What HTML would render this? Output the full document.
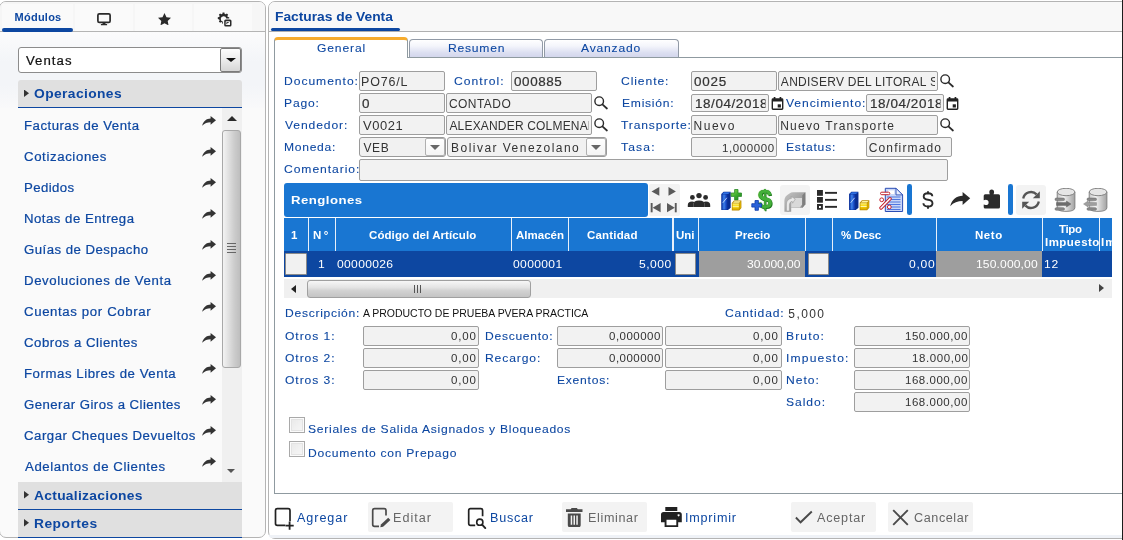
<!DOCTYPE html>
<html><head><meta charset="utf-8"><title>Facturas de Venta</title>
<style>
*{box-sizing:border-box;margin:0;padding:0}
html,body{width:1123px;height:540px;overflow:hidden;background:#fff}
body{font-family:"Liberation Sans",sans-serif;font-size:13px;color:#222;position:relative}
.a{position:absolute}
.t{position:absolute;white-space:pre;display:block;transform-origin:0 0}
i.a{width:0;height:0}
.panel{position:absolute;border:1px solid #b4b4b4;border-radius:7px;background:#fafafa}
#lp{left:-1px;top:1px;width:267px;height:537px;overflow:hidden}
#lp .hdr{position:absolute;left:0;top:0;width:264px;height:30px;border-bottom:1px solid #b4b4b4;background:#fafafa}
.acc{position:absolute;left:17px;width:224px;height:28px;background:#e0e0e0;border-bottom:1px solid #0d47a1}
.acc i{position:absolute;left:6px;top:9.500px;width:5px;height:7.500px;background:#333;clip-path:polygon(0 0,100% 50%,0 100%)}
#mp{left:268px;top:1px;width:870px;height:538px;border-top-right-radius:0;border-bottom-right-radius:0;background:#fff}
.f{position:absolute;height:20px;border:1px solid #9e9e9e;border-radius:2px;background:#f2f2f2;overflow:hidden}
.f .t{color:#333}
.btn{position:absolute;top:502px;height:29.600px;background:#f3f3f3;border-radius:2px}
#root{position:absolute;left:0;top:0;width:1123px;height:540px;will-change:transform}

</style></head><body><div id="root">
<div class="panel" id="lp"></div>
<div class="a" style="left:0px;top:31px;width:265px;height:1px;background:#b4b4b4"></div>
<div class="a" style="left:0px;top:32px;width:265px;height:76px;background:linear-gradient(#fbfbfc,#f3f5f8 40%,#f3f5f8 70%,#f9f9fa)"></div>
<div class="a" style="left:0px;top:2px;width:265px;height:29px;background:#f6f6f6;border-radius:6px 6px 0 0"></div>
<div class="a" style="left:2px;top:4px;width:71px;height:27px;background:#fafafa"></div><div class="a" style="left:75px;top:4px;width:58px;height:27px;background:#fafafa"></div><div class="a" style="left:135px;top:4px;width:57px;height:27px;background:#fafafa"></div><div class="a" style="left:194px;top:4px;width:58px;height:27px;background:#fafafa"></div>
<span class="t" style="left:14.62px;top:9px;font-size:11px;line-height:16px;letter-spacing:0.233px;color:#0d47a1;font-weight:700;">Módulos</span>
<div class="a" style="left:2px;top:28px;width:71px;height:4px;background:#0d47a1;border-radius:2px"></div>
<svg class="a" style="left:97px;top:12.5px" width="14" height="13" viewBox="0 0 14 13"><rect x=".9" y=".9" width="12.2" height="8.4" rx="1.4" fill="none" stroke="#2a2a2a" stroke-width="1.7"/><path d="M5.800 9.600h2.400l.4 1.500h1.500v1.100H3.900v-1.100h1.500z" fill="#2a2a2a"/></svg>
<svg class="a" style="left:157.500px;top:12.800px" width="13" height="12.400" viewBox="0 0 13 12.400"><path fill="#2a2a2a" d="M6.500 0l2 4.200 4.500.6-3.300 3.100.85 4.500L6.500 10.200 2.450 12.400l.85-4.500L0 4.800l4.500-.6z"/></svg>
<svg class="a" style="left:217px;top:11.500px" width="15" height="15" viewBox="0 0 15 15">
<g fill="#2a2a2a"><path d="M5.600.5h1.800l.3 1.400 1 .45 1.200-.8 1.250 1.250-.8 1.200.45 1 1.400.3v1.100H9.300A2.800 2.800 0 1 0 6 9.700v2.200H5.600l-.3-1.400-1-.45-1.200.8L1.850 9.600l.8-1.200-.45-1L.8 7.100V5.300l1.400-.3.45-1-.8-1.200L3.100 1.550l1.200.8 1-.45z"/>
<rect x="7.200" y="7.400" width="7.300" height="7.100" rx="1.500"/></g>
<rect x="8.700" y="9.300" width="4.300" height="3.700" rx=".5" fill="#fafafa"/><path d="M9.800 12.200v-1.700h1.900" stroke="#2a2a2a" stroke-width=".9" fill="none"/></svg>
<div class="a" style="left:18px;top:47px;width:224px;height:26px;border:1px solid #8c8c8c;border-radius:3px;background:#fff"></div>
<span class="t" style="left:25.86px;top:53px;font-size:12px;line-height:16px;letter-spacing:0.938px;color:#111;transform:scaleX(1.1);-webkit-text-stroke:.2px;">Ventas</span>
<div class="a" style="left:220px;top:48px;width:21px;height:24px;border:1px solid #7a7a7a;border-radius:2px;background:linear-gradient(#fdfdfd,#ececec 50%,#d6d6d6)"></div>
<i class="a" style="left:225.500px;top:57.500px;border-top:4.500px solid #111;border-left:5px solid transparent;border-right:5px solid transparent"></i>
<div class="acc" style="left:18px;top:80px;border-radius:3px 3px 0 0;"><i></i></div><span class="t" style="left:33.84px;top:86px;font-size:12px;line-height:16px;letter-spacing:0.347px;color:#0d47a1;font-weight:700;transform:scaleX(1.15);">Operaciones</span>
<div class="a" style="left:18px;top:108px;width:224px;height:373.500px;background:#fafafa"></div>
<span class="t" style="left:24.41px;top:118px;font-size:12px;line-height:16px;letter-spacing:0.449px;color:#0d47a1;transform:scaleX(1.1);-webkit-text-stroke:.2px;">Facturas de Venta</span>
<svg class="a" style="left:202px;top:115.5px" width="14" height="10" viewBox="0 0 14 10"><path fill="#333" d="M8.600 0 L14 4.300 L8.600 8.800 V6.200 C5.400 6.200 2.400 7.200 0.200 9.800 C1.200 5.200 4.600 2.700 8.600 2.600 Z"/></svg>
<span class="t" style="left:24.31px;top:149px;font-size:12px;line-height:16px;letter-spacing:0.565px;color:#0d47a1;transform:scaleX(1.1);-webkit-text-stroke:.2px;">Cotizaciones</span>
<svg class="a" style="left:202px;top:146.5px" width="14" height="10" viewBox="0 0 14 10"><path fill="#333" d="M8.600 0 L14 4.300 L8.600 8.800 V6.200 C5.400 6.200 2.400 7.200 0.200 9.800 C1.200 5.200 4.600 2.700 8.600 2.600 Z"/></svg>
<span class="t" style="left:24.41px;top:180px;font-size:12px;line-height:16px;letter-spacing:0.371px;color:#0d47a1;transform:scaleX(1.1);-webkit-text-stroke:.2px;">Pedidos</span>
<svg class="a" style="left:202px;top:177.5px" width="14" height="10" viewBox="0 0 14 10"><path fill="#333" d="M8.600 0 L14 4.300 L8.600 8.800 V6.200 C5.400 6.200 2.400 7.200 0.200 9.800 C1.200 5.200 4.600 2.700 8.600 2.600 Z"/></svg>
<span class="t" style="left:24.41px;top:211px;font-size:12px;line-height:16px;letter-spacing:0.443px;color:#0d47a1;transform:scaleX(1.1);-webkit-text-stroke:.2px;">Notas de Entrega</span>
<svg class="a" style="left:202px;top:208.5px" width="14" height="10" viewBox="0 0 14 10"><path fill="#333" d="M8.600 0 L14 4.300 L8.600 8.800 V6.200 C5.400 6.200 2.400 7.200 0.200 9.800 C1.200 5.200 4.600 2.700 8.600 2.600 Z"/></svg>
<span class="t" style="left:24.30px;top:242px;font-size:12px;line-height:16px;letter-spacing:0.421px;color:#0d47a1;transform:scaleX(1.1);-webkit-text-stroke:.2px;">Guías de Despacho</span>
<svg class="a" style="left:202px;top:239.5px" width="14" height="10" viewBox="0 0 14 10"><path fill="#333" d="M8.600 0 L14 4.300 L8.600 8.800 V6.200 C5.400 6.200 2.400 7.200 0.200 9.800 C1.200 5.200 4.600 2.700 8.600 2.600 Z"/></svg>
<span class="t" style="left:24.41px;top:273px;font-size:12px;line-height:16px;letter-spacing:0.546px;color:#0d47a1;transform:scaleX(1.1);-webkit-text-stroke:.2px;">Devoluciones de Venta</span>
<svg class="a" style="left:202px;top:270.5px" width="14" height="10" viewBox="0 0 14 10"><path fill="#333" d="M8.600 0 L14 4.300 L8.600 8.800 V6.200 C5.400 6.200 2.400 7.200 0.200 9.800 C1.200 5.200 4.600 2.700 8.600 2.600 Z"/></svg>
<span class="t" style="left:24.31px;top:304px;font-size:12px;line-height:16px;letter-spacing:0.572px;color:#0d47a1;transform:scaleX(1.1);-webkit-text-stroke:.2px;">Cuentas por Cobrar</span>
<svg class="a" style="left:202px;top:301.5px" width="14" height="10" viewBox="0 0 14 10"><path fill="#333" d="M8.600 0 L14 4.300 L8.600 8.800 V6.200 C5.400 6.200 2.400 7.200 0.200 9.800 C1.200 5.200 4.600 2.700 8.600 2.600 Z"/></svg>
<span class="t" style="left:24.31px;top:335px;font-size:12px;line-height:16px;letter-spacing:0.482px;color:#0d47a1;transform:scaleX(1.1);-webkit-text-stroke:.2px;">Cobros a Clientes</span>
<svg class="a" style="left:202px;top:332.5px" width="14" height="10" viewBox="0 0 14 10"><path fill="#333" d="M8.600 0 L14 4.300 L8.600 8.800 V6.200 C5.400 6.200 2.400 7.200 0.200 9.800 C1.200 5.200 4.600 2.700 8.600 2.600 Z"/></svg>
<span class="t" style="left:24.41px;top:366px;font-size:12px;line-height:16px;letter-spacing:0.500px;color:#0d47a1;transform:scaleX(1.1);-webkit-text-stroke:.2px;">Formas Libres de Venta</span>
<svg class="a" style="left:202px;top:363.5px" width="14" height="10" viewBox="0 0 14 10"><path fill="#333" d="M8.600 0 L14 4.300 L8.600 8.800 V6.200 C5.400 6.200 2.400 7.200 0.200 9.800 C1.200 5.200 4.600 2.700 8.600 2.600 Z"/></svg>
<span class="t" style="left:24.30px;top:397px;font-size:12px;line-height:16px;letter-spacing:0.412px;color:#0d47a1;transform:scaleX(1.1);-webkit-text-stroke:.2px;">Generar Giros a Clientes</span>
<svg class="a" style="left:202px;top:394.5px" width="14" height="10" viewBox="0 0 14 10"><path fill="#333" d="M8.600 0 L14 4.300 L8.600 8.800 V6.200 C5.400 6.200 2.400 7.200 0.200 9.800 C1.200 5.200 4.600 2.700 8.600 2.600 Z"/></svg>
<span class="t" style="left:24.31px;top:428px;font-size:12px;line-height:16px;letter-spacing:0.482px;color:#0d47a1;transform:scaleX(1.1);-webkit-text-stroke:.2px;">Cargar Cheques Devueltos</span>
<svg class="a" style="left:202px;top:425.5px" width="14" height="10" viewBox="0 0 14 10"><path fill="#333" d="M8.600 0 L14 4.300 L8.600 8.800 V6.200 C5.400 6.200 2.400 7.200 0.200 9.800 C1.200 5.200 4.600 2.700 8.600 2.600 Z"/></svg>
<span class="t" style="left:24.50px;top:459px;font-size:12px;line-height:16px;letter-spacing:0.532px;color:#0d47a1;transform:scaleX(1.1);-webkit-text-stroke:.2px;">Adelantos de Clientes</span>
<svg class="a" style="left:202px;top:456.5px" width="14" height="10" viewBox="0 0 14 10"><path fill="#333" d="M8.600 0 L14 4.300 L8.600 8.800 V6.200 C5.400 6.200 2.400 7.200 0.200 9.800 C1.200 5.200 4.600 2.700 8.600 2.600 Z"/></svg>
<div class="a" style="left:222px;top:108px;width:20px;height:373.500px;background:#f0f0f0"></div>
<i class="a" style="left:226.500px;top:115.500px;border-bottom:5.500px solid #2a2a2a;border-left:5px solid transparent;border-right:5px solid transparent"></i>
<i class="a" style="left:227px;top:468.500px;border-top:4.500px solid #555;border-left:4.500px solid transparent;border-right:4.500px solid transparent"></i>
<div class="a" style="left:222px;top:130px;width:19px;height:238px;border:1px solid #a8a8a8;border-radius:3px;background:linear-gradient(90deg,#f3f3f3,#dfdfdf 35%,#cdcdcd 65%,#bebebe)"></div>
<div class="a" style="left:227px;top:243px;width:9px;height:1px;background:#666;box-shadow:0 3px 0 #666,0 6px 0 #666,0 9px 0 #666"></div>
<div class="acc" style="left:18px;top:481.5px;"><i></i></div><span class="t" style="left:34.10px;top:488px;font-size:12px;line-height:16px;letter-spacing:0.261px;color:#0d47a1;font-weight:700;transform:scaleX(1.15);">Actualizaciones</span>
<div class="acc" style="left:18px;top:509.5px;"><i></i></div><span class="t" style="left:33.57px;top:516px;font-size:12px;line-height:16px;letter-spacing:0.409px;color:#0d47a1;font-weight:700;transform:scaleX(1.15);">Reportes</span>
<div class="panel" id="mp"></div>
<div class="a" style="left:269px;top:2px;width:853px;height:29px;background:#f8f8f8;border-top-left-radius:6px"></div>
<div class="a" style="left:269px;top:31px;width:853px;height:1px;background:#b0b0b0"></div>
<span class="t" style="left:275.17px;top:9px;font-size:12px;line-height:16px;letter-spacing:-0.013px;color:#0d47a1;font-weight:700;transform:scaleX(1.15);">Facturas de Venta</span>
<div class="a" style="left:271px;top:28px;width:129px;height:3.400px;background:#0d47a1;border-radius:2px"></div>
<div class="a" style="left:269px;top:535px;width:853px;height:3px;background:#eff2f7;border-bottom-left-radius:5px"></div>
<div class="a" style="left:274px;top:57px;width:860px;height:437px;border:1px solid #8f9aa0;border-right:0;background:#fff"></div>
<div class="a" style="left:409px;top:39px;width:134px;height:19px;border:1px solid #919aa6;border-bottom:1px solid #8f9aa0;border-radius:4px 4px 0 0;background:linear-gradient(#fff,#f4f5fb 35%,#dcdff1 75%,#d3d6ec)"></div><span class="t" style="left:448.07px;top:40px;font-size:11px;line-height:16px;letter-spacing:0.695px;color:#0d47a1;transform:scaleX(1.1);-webkit-text-stroke:.08px;">Resumen</span>
<div class="a" style="left:544px;top:39px;width:134.5px;height:19px;border:1px solid #919aa6;border-bottom:1px solid #8f9aa0;border-radius:4px 4px 0 0;background:linear-gradient(#fff,#f4f5fb 35%,#dcdff1 75%,#d3d6ec)"></div><span class="t" style="left:581.46px;top:40px;font-size:11px;line-height:16px;letter-spacing:0.740px;color:#0d47a1;transform:scaleX(1.1);-webkit-text-stroke:.08px;">Avanzado</span>
<div class="a" style="left:274px;top:37px;width:134px;height:21px;border:1px solid #8f9aa0;border-bottom:0;border-top:3px solid #f7ac2e;border-radius:4px 4px 0 0;background:#fff"></div>
<span class="t" style="left:317.21px;top:40px;font-size:11px;line-height:16px;letter-spacing:0.782px;color:#0d47a1;transform:scaleX(1.1);-webkit-text-stroke:.08px;">General</span>
<span class="t" style="left:283.67px;top:73px;font-size:11px;line-height:16px;letter-spacing:0.881px;color:#0d47a1;transform:scaleX(1.1);-webkit-text-stroke:.08px;">Documento:</span>
<div class="f" style="left:359px;top:71px;width:86px;height:20px"></div><span class="t" style="left:361.25px;top:74px;font-size:12px;line-height:16px;letter-spacing:0.801px;color:#333;transform:scaleX(1.04);">PO76/L</span>
<span class="t" style="left:454.17px;top:73px;font-size:11px;line-height:16px;letter-spacing:0.948px;color:#0d47a1;transform:scaleX(1.1);-webkit-text-stroke:.08px;">Control:</span>
<div class="f" style="left:511px;top:71px;width:86px;height:20px"></div><span class="t" style="left:514.09px;top:74px;font-size:12px;line-height:16px;letter-spacing:0.534px;color:#333;transform:scaleX(1.12);-webkit-text-stroke:.2px;">000885</span>
<span class="t" style="left:621.17px;top:73px;font-size:11px;line-height:16px;letter-spacing:0.830px;color:#0d47a1;transform:scaleX(1.1);-webkit-text-stroke:.08px;">Cliente:</span>
<div class="f" style="left:691px;top:71px;width:86px;height:20px"></div><span class="t" style="left:694.09px;top:74px;font-size:12px;line-height:16px;letter-spacing:0.671px;color:#333;transform:scaleX(1.12);-webkit-text-stroke:.2px;">0025</span>
<div class="f" style="left:778px;top:71px;width:160px;height:20px"></div><span class="t" style="left:780.86px;top:74px;font-size:12px;line-height:16px;letter-spacing:0.270px;color:#333;width:154.5px;overflow:hidden;">ANDISERV DEL LITORAL S</span>
<span class="t" style="left:283.67px;top:95px;font-size:11px;line-height:16px;letter-spacing:0.760px;color:#0d47a1;transform:scaleX(1.1);-webkit-text-stroke:.08px;">Pago:</span>
<div class="f" style="left:359px;top:93px;width:86px;height:20px"></div><span class="t" style="left:362.29px;top:96px;font-size:12px;line-height:16px;letter-spacing:0.000px;color:#333;transform:scaleX(1.12);-webkit-text-stroke:.2px;">0</span>
<div class="f" style="left:446px;top:93px;width:146px;height:20px"></div><span class="t" style="left:449.00px;top:96px;font-size:12px;line-height:16px;letter-spacing:0.435px;color:#333;">CONTADO</span>
<span class="t" style="left:621.67px;top:95px;font-size:11px;line-height:16px;letter-spacing:0.678px;color:#0d47a1;transform:scaleX(1.1);-webkit-text-stroke:.08px;">Emisión:</span>
<div class="f" style="left:691px;top:94px;width:78px;height:18px"></div><span class="t" style="left:695.39px;top:96px;font-size:12px;line-height:16px;letter-spacing:0.520px;color:#333;transform:scaleX(1.12);-webkit-text-stroke:.2px;width:62.6px;overflow:hidden;">18/04/2018</span>
<span class="t" style="left:785.77px;top:95px;font-size:11px;line-height:16px;letter-spacing:0.838px;color:#0d47a1;transform:scaleX(1.1);-webkit-text-stroke:.08px;">Vencimiento:</span>
<div class="f" style="left:866px;top:94px;width:78px;height:18px"></div><span class="t" style="left:870.39px;top:96px;font-size:12px;line-height:16px;letter-spacing:0.520px;color:#333;transform:scaleX(1.12);-webkit-text-stroke:.2px;width:62.6px;overflow:hidden;">18/04/2018</span>
<span class="t" style="left:284.77px;top:117px;font-size:11px;line-height:16px;letter-spacing:0.823px;color:#0d47a1;transform:scaleX(1.1);-webkit-text-stroke:.08px;">Vendedor:</span>
<div class="f" style="left:359px;top:115px;width:86px;height:20px"></div><span class="t" style="left:362.67px;top:118px;font-size:12px;line-height:16px;letter-spacing:0.488px;color:#333;transform:scaleX(1.08);">V0021</span>
<div class="f" style="left:446px;top:115px;width:146px;height:20px"></div><span class="t" style="left:449.44px;top:118px;font-size:12px;line-height:16px;letter-spacing:0.180px;color:#333;width:140.0px;overflow:hidden;">ALEXANDER COLMENARES</span>
<span class="t" style="left:621.44px;top:117px;font-size:11px;line-height:16px;letter-spacing:0.773px;color:#0d47a1;transform:scaleX(1.1);-webkit-text-stroke:.08px;">Transporte:</span>
<div class="f" style="left:691px;top:115px;width:86px;height:20px"></div><span class="t" style="left:693.43px;top:118px;font-size:12px;line-height:16px;letter-spacing:1.561px;color:#333;">Nuevo</span>
<div class="f" style="left:778px;top:115px;width:160px;height:20px"></div><span class="t" style="left:780.23px;top:118px;font-size:12px;line-height:16px;letter-spacing:1.222px;color:#333;">Nuevo Transporte</span>
<span class="t" style="left:283.67px;top:139px;font-size:11px;line-height:16px;letter-spacing:0.637px;color:#0d47a1;transform:scaleX(1.1);-webkit-text-stroke:.08px;">Moneda:</span>
<span class="t" style="left:621.44px;top:139px;font-size:11px;line-height:16px;letter-spacing:1.040px;color:#0d47a1;transform:scaleX(1.1);-webkit-text-stroke:.08px;">Tasa:</span>
<div class="f" style="left:691px;top:137px;width:86px;height:20px"></div><span class="t" style="left:721.75px;top:141px;font-size:10px;line-height:16px;letter-spacing:0.512px;color:#333;transform:scaleX(1.15);">1,000000</span>
<span class="t" style="left:785.67px;top:139px;font-size:11px;line-height:16px;letter-spacing:0.731px;color:#0d47a1;transform:scaleX(1.1);-webkit-text-stroke:.08px;">Estatus:</span>
<div class="f" style="left:866px;top:137px;width:86px;height:20px"></div><span class="t" style="left:868.81px;top:140px;font-size:12px;line-height:16px;letter-spacing:1.118px;color:#333;">Confirmado</span>
<div class="a" style="left:359px;top:137px;width:87px;height:20px;border:1px solid #9a9a9a;border-radius:3px;background:#f1f1f1"></div><div class="a" style="left:425px;top:138px;width:20px;height:18px;border:1px solid #b0b0b0;border-radius:2px;background:linear-gradient(#fff,#f4f4f4)"></div><i class="a" style="left:430px;top:145px;border-top:5px solid #666;border-left:5px solid transparent;border-right:5px solid transparent"></i><span class="t" style="left:363.40px;top:140px;font-size:12px;line-height:16px;letter-spacing:0.652px;color:#333;">VEB</span>
<div class="a" style="left:447px;top:137px;width:160px;height:20px;border:1px solid #9a9a9a;border-radius:3px;background:#f1f1f1"></div><div class="a" style="left:586px;top:138px;width:20px;height:18px;border:1px solid #b0b0b0;border-radius:2px;background:linear-gradient(#fff,#f4f4f4)"></div><i class="a" style="left:591px;top:145px;border-top:5px solid #666;border-left:5px solid transparent;border-right:5px solid transparent"></i><span class="t" style="left:451.11px;top:140px;font-size:12px;line-height:16px;letter-spacing:1.462px;color:#333;">Bolivar Venezolano</span>
<span class="t" style="left:284.17px;top:161px;font-size:11px;line-height:16px;letter-spacing:0.864px;color:#0d47a1;transform:scaleX(1.1);-webkit-text-stroke:.08px;">Comentario:</span>
<div class="f" style="left:359px;top:159px;width:589px;height:22px"></div>
<svg class="a" style="left:594px;top:96.2px" width="14" height="14" viewBox="0 0 14 14"><circle cx="5.200" cy="5.200" r="4.300" fill="none" stroke="#2a2a2a" stroke-width="1.400"/><path d="M8.400 8.400l4.500 4.100" stroke="#2a2a2a" stroke-width="1.700" stroke-linecap="round"/></svg>
<svg class="a" style="left:594px;top:118.2px" width="14" height="14" viewBox="0 0 14 14"><circle cx="5.200" cy="5.200" r="4.300" fill="none" stroke="#2a2a2a" stroke-width="1.400"/><path d="M8.400 8.400l4.500 4.100" stroke="#2a2a2a" stroke-width="1.700" stroke-linecap="round"/></svg>
<svg class="a" style="left:940.3px;top:74.2px" width="14" height="14" viewBox="0 0 14 14"><circle cx="5.200" cy="5.200" r="4.300" fill="none" stroke="#2a2a2a" stroke-width="1.400"/><path d="M8.400 8.400l4.500 4.100" stroke="#2a2a2a" stroke-width="1.700" stroke-linecap="round"/></svg>
<svg class="a" style="left:940.3px;top:118.2px" width="14" height="14" viewBox="0 0 14 14"><circle cx="5.200" cy="5.200" r="4.300" fill="none" stroke="#2a2a2a" stroke-width="1.400"/><path d="M8.400 8.400l4.500 4.100" stroke="#2a2a2a" stroke-width="1.700" stroke-linecap="round"/></svg>
<svg class="a" style="left:770.5px;top:96.8px" width="13" height="13" viewBox="0 0 13 13"><path fill="#222" d="M2 1.300h.7V0h1.700v1.300h4.200V0h1.700v1.300h.7q1.400 0 1.400 1.400v8.800q0 1.400-1.400 1.400H2q-1.400 0-1.400-1.400V2.700Q.6 1.300 2 1.300zM2 4.400v7.100h9V4.400z"/><rect x="6.700" y="7.300" width="3.200" height="3.200" fill="#222"/></svg>
<svg class="a" style="left:945.7px;top:96.8px" width="13" height="13" viewBox="0 0 13 13"><path fill="#222" d="M2 1.300h.7V0h1.700v1.300h4.200V0h1.700v1.300h.7q1.400 0 1.400 1.400v8.800q0 1.400-1.400 1.400H2q-1.400 0-1.400-1.400V2.700Q.6 1.300 2 1.300zM2 4.400v7.100h9V4.400z"/><rect x="6.700" y="7.300" width="3.200" height="3.200" fill="#222"/></svg>
<div class="a" style="left:284px;top:183px;width:364px;height:33.500px;background:#1976d2;border-radius:3px"></div>
<span class="t" style="left:291.21px;top:192px;font-size:11px;line-height:16px;letter-spacing:0.374px;color:#fff;font-weight:700;transform:scaleX(1.2);">Renglones</span>
<div class="a" style="left:649.300px;top:184.300px;width:30.700px;height:31.500px;background:#f3f3f3;border-radius:2px"></div>
<svg class="a" style="left:649.300px;top:184.300px" width="31" height="32" viewBox="0 0 31 32"><g fill="#5a5a5a">
<path d="M10.300 3.100v8.700L2.500 7.450z"/><path d="M19.500 3.100v8.700l7.400-4.350z"/>
<path d="M11.600 19v9.300L3.600 23.650z"/><rect x="1.700" y="19" width="1.900" height="9.300"/>
<path d="M18 19v9.300l7.800-4.650z"/><rect x="25.800" y="19" width="1.900" height="9.300"/></g></svg>
<div class="a" style="left:284px;top:218px;width:827.500px;height:33px;background:#1976d2"></div>
<div class="a" style="left:308px;top:218px;width:1.300px;height:33px;background:#e8f0fa"></div>
<div class="a" style="left:335px;top:218px;width:1.300px;height:33px;background:#e8f0fa"></div>
<div class="a" style="left:511px;top:218px;width:1.300px;height:33px;background:#e8f0fa"></div>
<div class="a" style="left:568px;top:218px;width:1.300px;height:33px;background:#e8f0fa"></div>
<div class="a" style="left:672.3px;top:218px;width:1.300px;height:33px;background:#e8f0fa"></div>
<div class="a" style="left:698px;top:218px;width:1.300px;height:33px;background:#e8f0fa"></div>
<div class="a" style="left:804.7px;top:218px;width:1.300px;height:33px;background:#e8f0fa"></div>
<div class="a" style="left:831.5px;top:218px;width:1.300px;height:33px;background:#e8f0fa"></div>
<div class="a" style="left:935.7px;top:218px;width:1.300px;height:33px;background:#e8f0fa"></div>
<div class="a" style="left:1041.7px;top:218px;width:1.300px;height:33px;background:#e8f0fa"></div>
<div class="a" style="left:1099px;top:218px;width:1.300px;height:33px;background:#e8f0fa"></div>
<span class="t" style="left:291.24px;top:228px;font-size:10px;line-height:16px;letter-spacing:0.000px;color:#fff;font-weight:700;transform:scaleX(1.15);">1</span>
<span class="t" style="left:313.31px;top:228px;font-size:10px;line-height:16px;letter-spacing:2.033px;color:#fff;font-weight:700;transform:scaleX(1.15);">N°</span>
<span class="t" style="left:368.85px;top:228px;font-size:10px;line-height:16px;letter-spacing:0.077px;color:#fff;font-weight:700;transform:scaleX(1.15);">Código del Artículo</span>
<span class="t" style="left:516.09px;top:228px;font-size:10px;line-height:16px;letter-spacing:0.015px;color:#fff;font-weight:700;transform:scaleX(1.15);">Almacén</span>
<span class="t" style="left:586.85px;top:228px;font-size:10px;line-height:16px;letter-spacing:0.157px;color:#fff;font-weight:700;transform:scaleX(1.15);">Cantidad</span>
<span class="t" style="left:676.37px;top:228px;font-size:10px;line-height:16px;letter-spacing:-0.011px;color:#fff;font-weight:700;transform:scaleX(1.15);">Uni</span>
<span class="t" style="left:735.31px;top:228px;font-size:10px;line-height:16px;letter-spacing:0.014px;color:#fff;font-weight:700;transform:scaleX(1.15);">Precio</span>
<span class="t" style="left:840.73px;top:228px;font-size:10px;line-height:16px;letter-spacing:-0.153px;color:#fff;font-weight:700;transform:scaleX(1.15);">% Desc</span>
<span class="t" style="left:975.31px;top:228px;font-size:10px;line-height:16px;letter-spacing:0.465px;color:#fff;font-weight:700;transform:scaleX(1.15);">Neto</span>
<span class="t" style="left:1059.16px;top:222px;font-size:10px;line-height:16px;letter-spacing:-0.294px;color:#fff;font-weight:700;transform:scaleX(1.15);">Tipo</span>
<span class="t" style="left:1045.31px;top:235px;font-size:10px;line-height:16px;letter-spacing:0.397px;color:#fff;font-weight:700;transform:scaleX(1.15);">Impuesto</span>
<div class="a" style="left:1100.500px;top:218px;width:11px;height:33px;overflow:hidden"><span class="t" style="left:0.91px;top:17px;font-size:10px;line-height:16px;letter-spacing:0.900px;color:#fff;font-weight:700;transform:scaleX(1.15);">Im</span></div>
<div class="a" style="left:284px;top:251px;width:827.500px;height:26px;background:#0d47a1"></div>
<div class="a" style="left:698.800px;top:251px;width:106.500px;height:26px;background:#9e9e9e"></div>
<div class="a" style="left:936.200px;top:251px;width:106px;height:26px;background:#9e9e9e"></div>
<div class="a" style="left:284.5px;top:253px;width:22.3px;height:21.500px;background:#f1f1f1;border:1px solid #8a8a8a;border-radius:1px"></div>
<div class="a" style="left:675px;top:253px;width:21px;height:21.500px;background:#f1f1f1;border:1px solid #8a8a8a;border-radius:1px"></div>
<div class="a" style="left:807.5px;top:253px;width:21px;height:21.500px;background:#f1f1f1;border:1px solid #8a8a8a;border-radius:1px"></div>
<span class="t" style="left:317.72px;top:256px;font-size:11px;line-height:16px;letter-spacing:0.000px;color:#fff;transform:scaleX(1.1);">1</span>
<span class="t" style="left:336.82px;top:256px;font-size:11px;line-height:16px;letter-spacing:0.287px;color:#fff;transform:scaleX(1.1);">00000026</span>
<span class="t" style="left:512.82px;top:256px;font-size:11px;line-height:16px;letter-spacing:0.310px;color:#fff;transform:scaleX(1.1);">0000001</span>
<span class="t" style="left:639.24px;top:256px;font-size:11px;line-height:16px;letter-spacing:0.443px;color:#fff;transform:scaleX(1.1);">5,000</span>
<span class="t" style="left:747.28px;top:256px;font-size:11px;line-height:16px;letter-spacing:-0.032px;color:#fff;transform:scaleX(1.1);">30.000,00</span>
<span class="t" style="left:908.82px;top:256px;font-size:11px;line-height:16px;letter-spacing:0.667px;color:#fff;transform:scaleX(1.1);">0,00</span>
<span class="t" style="left:975.52px;top:256px;font-size:11px;line-height:16px;letter-spacing:0.109px;color:#fff;transform:scaleX(1.1);">150.000,00</span>
<span class="t" style="left:1043.72px;top:256px;font-size:11px;line-height:16px;letter-spacing:0.810px;color:#fff;transform:scaleX(1.1);">12</span>
<div class="a" style="left:284px;top:279px;width:827.500px;height:19px;background:#f0f0f0"></div>
<i class="a" style="left:290.500px;top:284.500px;border-right:5px solid #222;border-top:4px solid transparent;border-bottom:4px solid transparent"></i>
<i class="a" style="left:1098.500px;top:284px;border-left:5px solid #444;border-top:4.500px solid transparent;border-bottom:4.500px solid transparent"></i>
<div class="a" style="left:306.500px;top:279.500px;width:224.500px;height:18px;border:1px solid #a0a0a0;border-radius:3px;background:linear-gradient(#f7f7f7,#e4e4e4 40%,#d2d2d2 60%,#c4c4c4)"></div>
<div class="a" style="left:414px;top:285px;width:1px;height:8px;background:#555;box-shadow:3px 0 0 #555,6px 0 0 #555"></div>
<span class="t" style="left:284.67px;top:305px;font-size:11px;line-height:16px;letter-spacing:0.642px;color:#0d47a1;transform:scaleX(1.1);-webkit-text-stroke:.08px;">Descripción:</span>
<span class="t" style="left:362.96px;top:306px;font-size:10px;line-height:16px;letter-spacing:-0.024px;color:#111;transform:scaleX(1.05);">A PRODUCTO DE PRUEBA PVERA PRACTICA</span>
<span class="t" style="left:725.17px;top:305px;font-size:11px;line-height:16px;letter-spacing:0.782px;color:#0d47a1;transform:scaleX(1.1);-webkit-text-stroke:.08px;">Cantidad:</span>
<span class="t" style="left:788.28px;top:306px;font-size:12px;line-height:16px;letter-spacing:1.436px;color:#333;">5,000</span>
<span class="t" style="left:285.32px;top:328px;font-size:11px;line-height:16px;letter-spacing:0.843px;color:#0d47a1;transform:scaleX(1.1);-webkit-text-stroke:.08px;">Otros 1:</span>
<div class="f" style="left:363px;top:326px;width:116px;height:20px"></div><span class="t" style="left:450.97px;top:329px;font-size:10px;line-height:16px;letter-spacing:0.724px;color:#333;transform:scaleX(1.15);">0,00</span>
<span class="t" style="left:285.32px;top:350px;font-size:11px;line-height:16px;letter-spacing:0.843px;color:#0d47a1;transform:scaleX(1.1);-webkit-text-stroke:.08px;">Otros 2:</span>
<div class="f" style="left:363px;top:348px;width:116px;height:20px"></div><span class="t" style="left:450.97px;top:351px;font-size:10px;line-height:16px;letter-spacing:0.724px;color:#333;transform:scaleX(1.15);">0,00</span>
<span class="t" style="left:285.32px;top:372px;font-size:11px;line-height:16px;letter-spacing:0.843px;color:#0d47a1;transform:scaleX(1.1);-webkit-text-stroke:.08px;">Otros 3:</span>
<div class="f" style="left:363px;top:370px;width:116px;height:20px"></div><span class="t" style="left:450.97px;top:373px;font-size:10px;line-height:16px;letter-spacing:0.724px;color:#333;transform:scaleX(1.15);">0,00</span>
<span class="t" style="left:484.67px;top:328px;font-size:11px;line-height:16px;letter-spacing:0.647px;color:#0d47a1;transform:scaleX(1.1);-webkit-text-stroke:.08px;">Descuento:</span>
<span class="t" style="left:484.67px;top:350px;font-size:11px;line-height:16px;letter-spacing:0.804px;color:#0d47a1;transform:scaleX(1.1);-webkit-text-stroke:.08px;">Recargo:</span>
<span class="t" style="left:556.67px;top:372px;font-size:11px;line-height:16px;letter-spacing:0.676px;color:#0d47a1;transform:scaleX(1.1);-webkit-text-stroke:.08px;">Exentos:</span>
<div class="f" style="left:557px;top:326px;width:106px;height:20px"></div><span class="t" style="left:608.97px;top:329px;font-size:10px;line-height:16px;letter-spacing:0.418px;color:#333;transform:scaleX(1.15);">0,000000</span>
<div class="f" style="left:557px;top:348px;width:106px;height:20px"></div><span class="t" style="left:608.97px;top:351px;font-size:10px;line-height:16px;letter-spacing:0.418px;color:#333;transform:scaleX(1.15);">0,000000</span>
<div class="f" style="left:665px;top:326px;width:116.5px;height:20px"></div><span class="t" style="left:752.97px;top:329px;font-size:10px;line-height:16px;letter-spacing:0.724px;color:#333;transform:scaleX(1.15);">0,00</span>
<div class="f" style="left:665px;top:348px;width:116.5px;height:20px"></div><span class="t" style="left:752.97px;top:351px;font-size:10px;line-height:16px;letter-spacing:0.724px;color:#333;transform:scaleX(1.15);">0,00</span>
<div class="f" style="left:665px;top:370px;width:116.5px;height:20px"></div><span class="t" style="left:752.97px;top:373px;font-size:10px;line-height:16px;letter-spacing:0.724px;color:#333;transform:scaleX(1.15);">0,00</span>
<span class="t" style="left:785.67px;top:328px;font-size:11px;line-height:16px;letter-spacing:1.032px;color:#0d47a1;transform:scaleX(1.1);-webkit-text-stroke:.08px;">Bruto:</span>
<span class="t" style="left:785.59px;top:350px;font-size:11px;line-height:16px;letter-spacing:1.050px;color:#0d47a1;transform:scaleX(1.1);-webkit-text-stroke:.08px;">Impuesto:</span>
<span class="t" style="left:785.67px;top:372px;font-size:11px;line-height:16px;letter-spacing:0.919px;color:#0d47a1;transform:scaleX(1.1);-webkit-text-stroke:.08px;">Neto:</span>
<span class="t" style="left:785.87px;top:394px;font-size:11px;line-height:16px;letter-spacing:0.861px;color:#0d47a1;transform:scaleX(1.1);-webkit-text-stroke:.08px;">Saldo:</span>
<div class="f" style="left:854px;top:326px;width:116px;height:20px"></div><span class="t" style="left:904.75px;top:329px;font-size:10px;line-height:16px;letter-spacing:0.456px;color:#333;transform:scaleX(1.15);">150.000,00</span>
<div class="f" style="left:854px;top:348px;width:116px;height:20px"></div><span class="t" style="left:911.75px;top:351px;font-size:10px;line-height:16px;letter-spacing:0.521px;color:#333;transform:scaleX(1.15);">18.000,00</span>
<div class="f" style="left:854px;top:370px;width:116px;height:20px"></div><span class="t" style="left:904.75px;top:373px;font-size:10px;line-height:16px;letter-spacing:0.456px;color:#333;transform:scaleX(1.15);">168.000,00</span>
<div class="f" style="left:854px;top:392px;width:116px;height:20px"></div><span class="t" style="left:904.75px;top:395px;font-size:10px;line-height:16px;letter-spacing:0.456px;color:#333;transform:scaleX(1.15);">168.000,00</span>
<div class="a" style="left:289px;top:417px;width:16px;height:16px;border:1px solid #a9a9a9;background:linear-gradient(135deg,#e8e8e8,#f8f8f8);box-shadow:inset 0 0 0 1px #fbfbfb,inset 0 0 0 2px #e3e3e3"></div>
<div class="a" style="left:289px;top:441px;width:16px;height:16px;border:1px solid #a9a9a9;background:linear-gradient(135deg,#e8e8e8,#f8f8f8);box-shadow:inset 0 0 0 1px #fbfbfb,inset 0 0 0 2px #e3e3e3"></div>
<span class="t" style="left:307.87px;top:421px;font-size:11px;line-height:16px;letter-spacing:0.658px;color:#0d47a1;transform:scaleX(1.1);-webkit-text-stroke:.08px;">Seriales de Salida Asignados y Bloqueados</span>
<span class="t" style="left:307.67px;top:445px;font-size:11px;line-height:16px;letter-spacing:0.663px;color:#0d47a1;transform:scaleX(1.1);-webkit-text-stroke:.08px;">Documento con Prepago</span>
<div class="btn" style="left:368.3px;width:84.7px"></div>
<div class="btn" style="left:562.4px;width:84.4px"></div>
<div class="btn" style="left:791px;width:84.8px"></div>
<div class="btn" style="left:888px;width:84.7px"></div>
<span class="t" style="left:296.55px;top:510px;font-size:12px;line-height:16px;letter-spacing:0.895px;color:#0d47a1;transform:scaleX(1.05);">Agregar</span>
<span class="t" style="left:393.24px;top:510px;font-size:12px;line-height:16px;letter-spacing:0.939px;color:#666;transform:scaleX(1.05);">Editar</span>
<span class="t" style="left:490.04px;top:510px;font-size:12px;line-height:16px;letter-spacing:0.718px;color:#0d47a1;transform:scaleX(1.05);">Buscar</span>
<span class="t" style="left:587.84px;top:510px;font-size:12px;line-height:16px;letter-spacing:0.600px;color:#666;transform:scaleX(1.05);">Eliminar</span>
<span class="t" style="left:684.95px;top:510px;font-size:12px;line-height:16px;letter-spacing:0.742px;color:#0d47a1;transform:scaleX(1.05);">Imprimir</span>
<span class="t" style="left:816.75px;top:510px;font-size:12px;line-height:16px;letter-spacing:0.758px;color:#666;transform:scaleX(1.05);">Aceptar</span>
<span class="t" style="left:913.74px;top:510px;font-size:12px;line-height:16px;letter-spacing:0.561px;color:#666;transform:scaleX(1.05);">Cancelar</span>
<svg class="a" style="left:273.500px;top:506.500px" width="21" height="24" viewBox="0 0 21 24"><path d="M11.300 18.300H3.300Q1.500 18.300 1.500 16.500V3.400Q1.500 1.600 3.300 1.600H14.200Q16 1.600 16 3.400V14.200" fill="none" stroke="#222" stroke-width="1.700"/><path d="M15.600 14.600v8.200M11.500 18.700h8.200" stroke="#222" stroke-width="1.800"/></svg>
<svg class="a" style="left:371px;top:506.500px" width="21" height="22" viewBox="0 0 21 22"><path d="M8 19.300H3.500Q1.700 19.300 1.700 17.500V3.400Q1.700 1.600 3.500 1.600H13.200Q15 1.600 15 3.400V8.500" fill="none" stroke="#4a4a4a" stroke-width="1.700"/><path d="M9.300 20.200l.6-2.700 7.300-6.800 2.200 2.300-7.300 6.800z" fill="#4a4a4a"/></svg>
<svg class="a" style="left:466.800px;top:506.500px" width="21" height="24" viewBox="0 0 21 24"><path d="M8.200 18.300H3.400Q1.700 18.300 1.700 16.600V3.400Q1.700 1.700 3.400 1.700H13.900Q15.600 1.700 15.600 3.400V9.200" fill="none" stroke="#222" stroke-width="1.700"/><circle cx="12.800" cy="15.200" r="3.100" fill="none" stroke="#222" stroke-width="1.600"/><path d="M15.100 17.600l3.200 3.500" stroke="#222" stroke-width="1.900" stroke-linecap="round"/></svg>
<svg class="a" style="left:566px;top:507.600px" width="16.500" height="19.200" viewBox="0 0 16.500 19.200"><path fill="#4a4a4a" d="M5.600 0h5.300l.9 1.300h4.700v2.600H0V1.300h4.700zM1.800 5.600h12.900v11.700q0 1.900-1.900 1.900H3.700q-1.900 0-1.900-1.900zM4.700 7.600v9.200h1.500V7.600zm2.800 0v9.200h1.500V7.600zm2.800 0v9.200h1.500V7.600z"/></svg>
<svg class="a" style="left:661px;top:506.900px" width="21" height="20" viewBox="0 0 21 20"><path fill="#222" d="M4.300 0h12v4H4.300zM2.600 5h15.600q2.600 0 2.600 2.600v7.600h-3.600V20H3.600v-4.800H0V7.600Q0 5 2.600 5zM5.500 12.800v5.400h9.800v-5.400zM17.600 7.300a1 1 0 1 0 .01 0z"/></svg>
<svg class="a" style="left:793.500px;top:509px" width="20" height="16" viewBox="0 0 20 16"><path d="M1.900 8.500l4.700 4.800L17.800 2.500" fill="none" stroke="#4a4a4a" stroke-width="1.900"/></svg>
<svg class="a" style="left:892px;top:508.500px" width="17" height="17" viewBox="0 0 17 17"><path d="M1.200 1.200l14.600 14.600M15.800 1.200L1.200 15.800" fill="none" stroke="#4a4a4a" stroke-width="1.900"/></svg>
<svg class="a" width="0" height="0" style="left:0;top:0"><defs>
<linearGradient id="gb" x1="0" y1="0" x2="1" y2="0"><stop offset="0" stop-color="#0b36a8"/><stop offset=".35" stop-color="#3f82ea"/><stop offset=".7" stop-color="#1647c2"/><stop offset="1" stop-color="#082a8c"/></linearGradient>
<linearGradient id="gy" x1="0" y1="0" x2="0" y2="1"><stop offset="0" stop-color="#fff27a"/><stop offset=".5" stop-color="#f7d400"/><stop offset="1" stop-color="#d9a800"/></linearGradient>
<linearGradient id="gg" x1="0" y1="0" x2="1" y2="1"><stop offset="0" stop-color="#9ee05a"/><stop offset=".5" stop-color="#3fae2f"/><stop offset="1" stop-color="#1f7f1f"/></linearGradient>
<linearGradient id="gc" x1="0" y1="0" x2="1" y2="0"><stop offset="0" stop-color="#c9c9c9"/><stop offset=".35" stop-color="#f3f3f3"/><stop offset="1" stop-color="#a2a2a2"/></linearGradient>
<linearGradient id="gq" x1="0" y1="0" x2="1" y2="1"><stop offset="0" stop-color="#c4c4c4"/><stop offset="1" stop-color="#858585"/></linearGradient>
</defs></svg>
<svg class="a" style="left:687px;top:192px" width="24" height="16" viewBox="0 0 24 16"><g fill="#2b2b2b"><circle cx="12" cy="3.600" r="2.700"/><circle cx="5.400" cy="5.400" r="2.400"/><circle cx="18.600" cy="5.400" r="2.400"/><path d="M6.300 14.900v-2.200q0-4.200 5.700-4.200t5.700 4.200v2.200z"/><path d="M.8 14.900v-1.800q0-3.600 4.300-3.600 1.400 0 2.300.4-1 1.100-1 2.800v2.200zM23.200 14.900v-1.800q0-3.600-4.300-3.600-1.400 0-2.300.4 1 1.100 1 2.800v2.200z"/></g></svg>
<svg class="a" style="left:720px;top:188px" width="24" height="24" viewBox="0 0 24 24"><path d="M1.3 6.0L3.6 3.8H10.6V19.8L8 22.1H1.3z" fill="#0a2f96"/><path d="M1.8 6.4H8V21.6H1.8z" fill="url(#gb)"/><path d="M2.2 6.0L4 4.3H10.2L8.2 6.0z" fill="#2f6fe0"/><path d="M8.6 6.3L10.3 4.7V19.6L8.6 21.2z" fill="#0a2c8e"/><path d="M2.8 14.8L6.8 9.8" stroke="#cfe2ff" stroke-width="1" opacity=".85"/><path d="M14.600000000000001 1.5h3.4v3.5h3.5v3.4h-3.5v3.5h-3.4v-3.5h-3.5v-3.4h3.5z" fill="url(#gg)" stroke="#2a8a2a" stroke-width=".8" stroke-linejoin="round"/><path d="M11.8 14.9L14.0 12.5H21.4V19.9L19.200000000000003 22.5H11.8z" fill="#b98a00"/><path d="M12.5 15.4H18.9V21.8H12.5z" fill="url(#gy)"/><path d="M13.0 14.8L14.5 13.2H20.6L19.1 14.8z" fill="#fff6a0"/><path d="M19.5 15.3L20.8 13.8V19.7L19.5 21.3z" fill="#e0b400"/><path d="M12.700000000000001 18.7H18.8" stroke="#fff9c0" stroke-width=".9"/></svg>
<span class="t" style="left:757.800px;top:184.500px;font-size:26px;line-height:28px;font-weight:700;color:#44b03a;text-shadow:0 0 1px #1c6e1c,.6px .6px 0 #1f7a1f,-.5px -.5px 0 #8fd65a">$</span>
<svg class="a" style="left:750px;top:198px" width="14" height="14" viewBox="0 0 14 14"><path d="M5.0 2.5h3.4v3.2h3.2v3.4h-3.2v3.2h-3.4v-3.2h-3.2v-3.4h3.2z" fill="#2a62d8" stroke="#0d3aa8" stroke-width=".8" stroke-linejoin="round"/></svg>
<div class="a" style="left:780px;top:185px;width:30px;height:29.600px;background:#f3f3f3;border-radius:3px"></div>
<svg class="a" style="left:783px;top:190px" width="24" height="23" viewBox="0 0 24 23"><path d="M6.500 3.500Q8 2.200 10 2.200H22.400V14.200L19.600 17.800H8.200V21.800H1.400V10.500Q1.400 6 6.500 3.500z" fill="url(#gq)"/><path d="M19.300 5.200L22.300 2.300V14.200L19.400 17.700z" fill="#7f7f7f"/><path d="M8.200 17.600V12.600Q8.200 8 13 8H19V14.500L17 17.600z" fill="#d9d9d9"/><path d="M3.400 21V14Q3.400 9.400 8.500 8.300L8 6.300 12.300 9 9.600 13.200 9.100 11.200Q6.400 12 6.400 14.800V21z" fill="#e9e9e9" stroke="#9a9a9a" stroke-width=".6"/></svg>
<svg class="a" style="left:817px;top:190px" width="21" height="20" viewBox="0 0 21 20"><g fill="#2b2b2b"><rect x="0" y="0" width="5.900" height="5.800"/><rect x="0" y="7" width="5.900" height="5.700"/><path d="M0 14h5.900v5.800H0zM2 16v1.900h1.900V16z"/><rect x="8" y="1.900" width="12" height="1.900"/><rect x="8" y="8.900" width="12" height="1.900"/><rect x="8" y="15.900" width="12" height="1.900"/></g></svg>
<svg class="a" style="left:848px;top:190px" width="23" height="22" viewBox="0 0 23 22"><path d="M1.1 4.0L3.4000000000000004 1.8H10.4V17.8L7.8 20.1H1.1z" fill="#0a2f96"/><path d="M1.6 4.4H7.8V19.6H1.6z" fill="url(#gb)"/><path d="M2.0 4.0L3.8 2.3H10.0L8.0 4.0z" fill="#2f6fe0"/><path d="M8.4 4.3L10.100000000000001 2.7V17.6L8.4 19.2z" fill="#0a2c8e"/><path d="M2.6 12.8L6.6 7.8" stroke="#cfe2ff" stroke-width="1" opacity=".85"/><path d="M11.7 12.700000000000001L13.899999999999999 10.3H21.299999999999997V17.700000000000003L19.1 20.3H11.7z" fill="#b98a00"/><path d="M12.399999999999999 13.200000000000001H18.799999999999997V19.6H12.399999999999999z" fill="url(#gy)"/><path d="M12.899999999999999 12.600000000000001L14.399999999999999 11.0H20.5L19.0 12.600000000000001z" fill="#fff6a0"/><path d="M19.4 13.100000000000001L20.7 11.600000000000001V17.5L19.4 19.1z" fill="#e0b400"/><path d="M12.6 16.5H18.7" stroke="#fff9c0" stroke-width=".9"/></svg>
<svg class="a" style="left:879px;top:187px" width="25" height="26" viewBox="0 0 25 26"><path d="M6.300 1.300H17l6.600 6.600V24.500H6.300z" fill="#c9d6f7" stroke="#2a4db4" stroke-width="1"/><path d="M17 1.300V7.900h6.600z" fill="#e8eeff" stroke="#2a4db4" stroke-width=".9" stroke-linejoin="round"/><rect x="9" y="3.400" width="6.300" height="3.600" fill="#fff"/>
<g stroke="#4f76e0" stroke-width="1"><path d="M8 10h13.500M8 12.500h13.500M8 15h13.500M8 17.500h13.500M8 20h13.500M8 22.500h13.500"/></g>
<rect x="1.500" y="5.200" width="9.300" height="2.500" rx="1.250" fill="#fff" stroke="#c4202c" stroke-width="1"/>
<path d="M2 21L11 11.800" stroke="#c4202c" stroke-width="3.400" stroke-linecap="round"/><path d="M2 21L11 11.800" stroke="#fff" stroke-width="1.500" stroke-linecap="round"/>
<circle cx="2.700" cy="12.800" r="1.900" fill="#fff" stroke="#c4202c" stroke-width="1"/><circle cx="10.300" cy="20" r="1.900" fill="#fff" stroke="#c4202c" stroke-width="1"/></svg>
<div class="a" style="left:907.2px;top:183.500px;width:4.600px;height:31.800px;background:#1976d2;border-radius:2.300px"></div>
<div class="a" style="left:1008.1px;top:183.500px;width:4.600px;height:31.800px;background:#1976d2;border-radius:2.300px"></div>
<svg class="a" style="left:921px;top:190px" width="14" height="20" viewBox="0 0 14 20"><path d="M11.300 6.300Q11.300 3.300 7 3.300T2.700 6.500Q2.700 9.300 7 9.700T11.500 13.200Q11.500 16.500 7 16.500T2.400 13.300" fill="none" stroke="#2b2b2b" stroke-width="1.900"/><path d="M7 1.300v3M7 15.800v3" stroke="#2b2b2b" stroke-width="1.900"/></svg>
<svg class="a" style="left:950px;top:192px" width="20.5" height="14.5" viewBox="0 0 20.5 14.5"><path fill="#2b2b2b" d="M12.600 0L20.200 6.300 12.600 12.900V9.100C7.900 9.100 3.500 10.500 .2 14.300 1.700 7.600 6.700 3.900 12.600 3.800z"/></svg>
<svg class="a" style="left:983px;top:189px" width="18" height="20" viewBox="0 0 18 20"><path fill="#2b2b2b" d="M2.200 5.300H6.900Q6.300 4.200 6.300 3.200 6.300.6 8.700.6T11.100 3.200Q11.100 4.200 10.500 5.300H15.500Q17 5.300 17 6.800V17.900Q17 19.400 15.500 19.400H2.200Q.7 19.400 .7 17.900V15.600Q1.700 16 2.600 16 5.600 16 5.600 13.400T2.600 10.800Q1.700 10.800 .7 11.300V6.800Q.7 5.300 2.200 5.300z"/></svg>
<div class="a" style="left:1016px;top:185px;width:30px;height:29.600px;background:#f3f3f3;border-radius:3px"></div>
<svg class="a" style="left:1021px;top:190px" width="20" height="20" viewBox="0 0 20 20"><g fill="none" stroke="#555" stroke-width="2.300"><path d="M2.200 8.500A7.900 7.900 0 0 1 15.600 4.400"/><path d="M17.800 11.500A7.900 7.900 0 0 1 4.400 15.600"/></g><path d="M18.800 1.200V8.200H11.800z" fill="#555"/><path d="M1.200 18.800V11.800H8.200z" fill="#555"/></svg>
<svg class="a" style="left:1054px;top:187.8px" width="23" height="25" viewBox="0 0 23 25"><path d="M3.2 4V19.600Q3.2 23.400 12.05 23.400T20.9 19.600V4z" fill="url(#gc)" stroke="#7b7b7b" stroke-width=".9"/><ellipse cx="12.05" cy="4" rx="8.850" ry="3.700" fill="#e6e6e6" stroke="#7b7b7b" stroke-width=".9"/><rect x="1.0" y="10" width="9.500" height="2.600" rx="1.200" fill="#8a8a8a" stroke="#666" stroke-width=".5"/><rect x="1.0" y="19.700" width="9.500" height="2.600" rx="1.200" fill="#8a8a8a" stroke="#666" stroke-width=".5"/><path d="M2.5 14.600H12.5V13L17.0 16 12.5 19V17.400H2.5z" fill="#6e6e6e" stroke="#555" stroke-width=".4"/></svg>
<svg class="a" style="left:1082px;top:187.8px" width="27" height="25" viewBox="0 0 27 25"><path d="M7.2 4V19.600Q7.2 23.400 16.05 23.400T24.9 19.600V4z" fill="url(#gc)" stroke="#7b7b7b" stroke-width=".9"/><ellipse cx="16.05" cy="4" rx="8.850" ry="3.700" fill="#e6e6e6" stroke="#7b7b7b" stroke-width=".9"/><rect x="5.0" y="10" width="9.500" height="2.600" rx="1.200" fill="#8a8a8a" stroke="#666" stroke-width=".5"/><rect x="5.0" y="19.700" width="9.500" height="2.600" rx="1.200" fill="#8a8a8a" stroke="#666" stroke-width=".5"/><path d="M14.5 14.600H6.0V13L1.5 16 6.0 19V17.400H14.5z" fill="#a0a0a0" stroke="#777" stroke-width=".4"/></svg>
<div class="a" style="left:1122px;top:0;width:1px;height:540px;background:#1c1c1c"></div>
</div></body></html>
